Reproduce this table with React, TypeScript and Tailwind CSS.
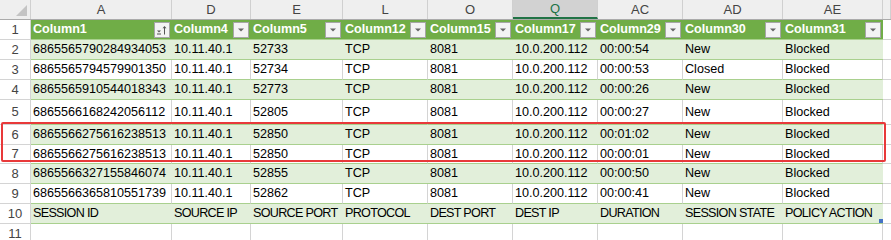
import React from "react";

const widths = [141, 79, 92, 85, 85, 85, 85, 100, 100];
const letters = ["A", "D", "E", "L", "O", "Q", "AC", "AD", "AE"];
const heads = ["Column1", "Column4", "Column5", "Column12", "Column15", "Column17", "Column29", "Column30", "Column31"];
const data: string[][] = [
  ["6865565790284934053", "10.11.40.1", "52733", "TCP", "8081", "10.0.200.112", "00:00:54", "New", "Blocked"],
  ["6865565794579901350", "10.11.40.1", "52734", "TCP", "8081", "10.0.200.112", "00:00:53", "Closed", "Blocked"],
  ["6865565910544018343", "10.11.40.1", "52773", "TCP", "8081", "10.0.200.112", "00:00:26", "New", "Blocked"],
  ["6865566168242056112", "10.11.40.1", "52805", "TCP", "8081", "10.0.200.112", "00:00:27", "New", "Blocked"],
  ["6865566275616238513", "10.11.40.1", "52850", "TCP", "8081", "10.0.200.112", "00:01:02", "New", "Blocked"],
  ["6865566275616238513", "10.11.40.1", "52850", "TCP", "8081", "10.0.200.112", "00:00:01", "New", "Blocked"],
  ["6865566327155846074", "10.11.40.1", "52855", "TCP", "8081", "10.0.200.112", "00:00:50", "New", "Blocked"],
  ["6865566365810551739", "10.11.40.1", "52862", "TCP", "8081", "10.0.200.112", "00:00:41", "New", "Blocked"],
  ["SESSION ID", "SOURCE IP", "SOURCE PORT", "PROTOCOL", "DEST PORT", "DEST IP", "DURATION", "SESSION STATE", "POLICY ACTION"],
];
const rowHeights = [20, 20, 20, 25, 20, 19, 20, 20, 20];

function FilterBtn({ sort }: { sort?: boolean }) {
  return (
    <div className="w-[16px] h-[16px] bg-[#f3f3f3] border border-[#a6a6a6] flex items-center justify-center shrink-0">
      {sort ? (
        <svg width="12" height="12" viewBox="0 0 12 12">
          <path d="M1 6.5 L5 6.5 L3 8.5 Z" fill="#555" />
          <rect x="1" y="9.5" width="4" height="1" fill="#555" />
          <path d="M8.5 2 L6.5 4.2 L10.5 4.2 Z" fill="#555" />
          <rect x="8" y="4" width="1" height="6.5" fill="#555" />
        </svg>
      ) : (
        <svg width="10" height="10" viewBox="0 0 10 10">
          <path d="M2 3.5 L8 3.5 L5 6.5 Z" fill="#666" />
        </svg>
      )}
    </div>
  );
}

export default function App() {
  const font = { fontFamily: '"Liberation Sans", Arial, sans-serif' };
  return (
    <div className="relative w-[891px] h-[240px] overflow-hidden bg-white text-[12.6px] text-black" style={font}>
      {/* column letters */}
      <div className="flex h-[20px] bg-[#efefef] border-b border-[#ababab]">
        <div className="w-[31px] shrink-0 border-r border-[#d0d0d0] relative">
          <svg className="absolute right-[3px] bottom-[3px]" width="11" height="11" viewBox="0 0 11 11">
            <path d="M11 0 L11 11 L0 11 Z" fill="#c4c4c4" />
          </svg>
        </div>
        {letters.map((l, i) => (
          <div
            key={l}
            style={{ width: widths[i] }}
            className={
              "shrink-0 flex items-center justify-center border-r border-[#d0d0d0] text-[13px] " +
              (l === "Q" ? "bg-[#d2d2d2] text-[#217346] border-b-2 border-b-[#217346]" : "text-[#444]")
            }
          >
            {l}
          </div>
        ))}
        <div className="flex-1 border-r border-[#d0d0d0]" />
      </div>

      {/* row 1 table header */}
      <div className="flex h-[20px]">
        <div className="w-[31px] shrink-0 flex items-center justify-center text-[#444] text-[13px] border-r border-b border-[#d4d4d4] bg-white">
          1
        </div>
        {heads.map((h, i) => (
          <div
            key={h}
            style={{ width: widths[i] }}
            className="shrink-0 flex items-center justify-between bg-[#70ad47] text-white font-bold pl-[2px] pr-[2px] border-b border-[#a9d08e]"
          >
            <span>{h}</span>
            <FilterBtn sort={i === 0} />
          </div>
        ))}
        <div className="flex-1 border-b border-[#d4d4d4]" />
      </div>

      {data.map((row, r) => {
        const green = r % 2 === 0;
        const last = r === 8;
        return (
          <div key={r} className="flex" style={{ height: rowHeights[r] }}>
            <div className="w-[31px] shrink-0 flex items-center justify-center text-[#444] text-[13px] border-r border-b border-[#d4d4d4] bg-white">
              {r + 2}
            </div>
            {row.map((c, i) => (
              <div
                key={i}
                style={{ width: widths[i] }}
                className={
                  "relative shrink-0 flex items-center pl-[2px] whitespace-nowrap overflow-hidden border-b border-[#a9d08e] " +
                  (green ? "bg-[#e2efda] " : "bg-white border-r border-r-[#d4d4d4] ") +
                  (last ? "tracking-[-0.7px]" : "")
                }
              >
                {c}
                {last && i === 8 && (
                  <div className="absolute right-0 bottom-0 w-[4px] h-[4px] bg-[#4472c4]" />
                )}
              </div>
            ))}
            <div className="flex-1 border-b border-[#d4d4d4]" />
          </div>
        );
      })}

      {/* row 11 */}
      <div className="flex h-[20px]">
        <div className="w-[31px] shrink-0 flex items-center justify-center text-[#444] text-[13px] border-r border-[#d4d4d4] bg-white">
          11
        </div>
        {widths.map((w, i) => (
          <div key={i} style={{ width: w }} className="shrink-0 border-r border-[#d4d4d4]" />
        ))}
      </div>

      {/* highlight */}
      <div className="absolute left-[1px] top-[122px] w-[885px] h-[40px] border-2 border-[#e8393a] rounded-[2px] pointer-events-none" />
    </div>
  );
}
